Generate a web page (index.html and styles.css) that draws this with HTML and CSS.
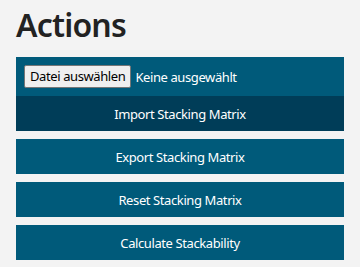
FILE: index.html
```html
<!DOCTYPE html>
<html lang="de">
<head>
    <meta charset="UTF-8">
    <meta name="viewport" content="width=device-width, initial-scale=1.0">
    <title>Actions</title>
    <link rel="stylesheet" href="styles.css">
</head>
<body>
    <div class="actions">
        <h1>Actions</h1>

        <div class="import-group">
            <div class="file-row">
                <label class="file-btn" for="matrix-file">Datei auswählen</label>
                <span class="file-name">Keine ausgewählt</span>
                <input type="file" id="matrix-file" class="file-input">
            </div>
            <button class="action-btn import-btn">Import Stacking Matrix</button>
        </div>

        <button class="action-btn">Export Stacking Matrix</button>
        <button class="action-btn">Reset Stacking Matrix</button>
        <button class="action-btn">Calculate Stackability</button>
    </div>
</body>
</html>
```

FILE: styles.css
```css
* {
    box-sizing: border-box;
    margin: 0;
    padding: 0;
    font-family: 'Noto Sans', 'Open Sans', sans-serif;
}

body {
    background-color: #f3f3f3;
    padding: 0 16px;
}

.actions {
    display: flex;
    flex-direction: column;
    gap: 8px;
}

h1 {
    font-size: 32px;
    font-weight: 600;
    letter-spacing: -0.8px;
    color: #222;
    line-height: 40px;
    padding-top: 5px;
    margin-bottom: 4px;
}

.import-group {
    background-color: #005a7a;
    display: flex;
    flex-direction: column;
}

.file-row {
    display: flex;
    align-items: center;
    gap: 4px;
    height: 39px;
    padding: 0 8px;
}

.file-btn {
    background-color: #efefef;
    border: 1px solid #767676;
    border-radius: 2px;
    color: #000;
    font-size: 13px;
    letter-spacing: -0.4px;
    height: 23px;
    line-height: 21px;
    padding: 0 5px;
    cursor: pointer;
}

.file-name {
    color: #fff;
    font-size: 13px;
    letter-spacing: -0.4px;
}

.file-input {
    display: none;
}

.action-btn {
    background-color: #005a7a;
    color: #fff;
    border: none;
    height: 35px;
    font-size: 13px;
    letter-spacing: -0.4px;
    cursor: pointer;
}

.import-btn {
    background-color: #003d58;
}
```
